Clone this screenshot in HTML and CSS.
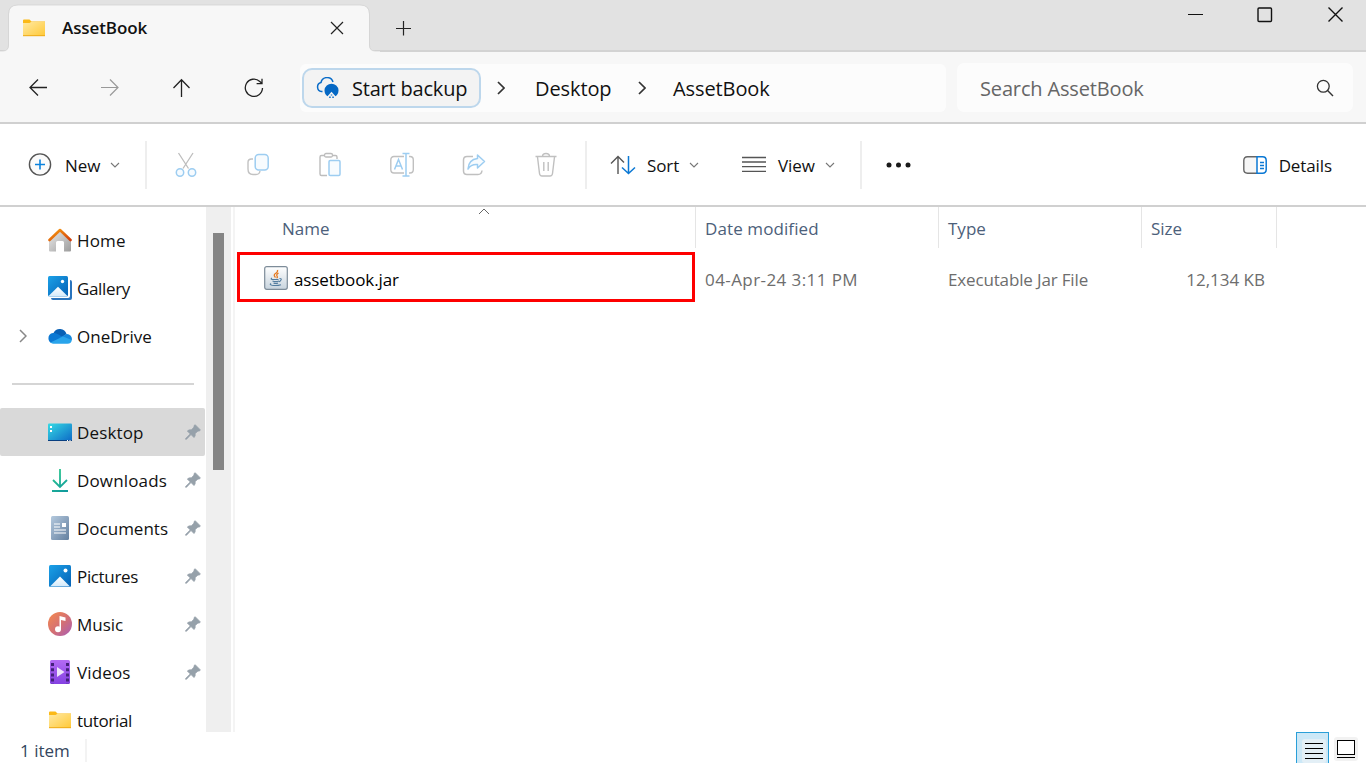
FILE: index.html
```
<!DOCTYPE html>
<html lang="en">
<head>
<meta charset="utf-8">
<title>AssetBook</title>
<link rel="stylesheet" href="styles.css">
</head>
<body>
<svg class="defs" width="0" height="0">
  <defs>
    <linearGradient id="gFolder" x1="0" y1="0" x2="1" y2="1"><stop offset="0" stop-color="#ffe9a2"/><stop offset="1" stop-color="#ffc938"/></linearGradient>
    <linearGradient id="gBlue" x1="0" y1="0" x2="1" y2="1"><stop offset="0" stop-color="#1ba1e8"/><stop offset="1" stop-color="#0561b5"/></linearGradient>
    <linearGradient id="gSnow" x1="0" y1="0" x2="0" y2="1"><stop offset="0" stop-color="#fff"/><stop offset="1" stop-color="#d3eafb"/></linearGradient>
    <linearGradient id="gWall" x1="0" y1="0" x2="1" y2="1"><stop offset="0" stop-color="#ececec"/><stop offset="1" stop-color="#9c9c9c"/></linearGradient>
    <linearGradient id="gRoof" x1="0" y1="0" x2="1" y2="1"><stop offset="0" stop-color="#f9a011"/><stop offset="1" stop-color="#d13d0c"/></linearGradient>
    <linearGradient id="gDesk" x1="0" y1="0" x2="1" y2="1"><stop offset="0" stop-color="#36dbe4"/><stop offset="1" stop-color="#0d69c6"/></linearGradient>
    <linearGradient id="gDown" gradientUnits="userSpaceOnUse" x1="4" y1="0" x2="20" y2="22"><stop offset="0" stop-color="#2fcf8b"/><stop offset="1" stop-color="#119a9d"/></linearGradient>
    <linearGradient id="gDoc" x1="0" y1="0" x2="1" y2="1"><stop offset="0" stop-color="#b4c9de"/><stop offset="1" stop-color="#64809f"/></linearGradient>
    <linearGradient id="gMusic" x1="0" y1="0" x2="1" y2="1"><stop offset="0" stop-color="#f68a4c"/><stop offset=".55" stop-color="#d26f76"/><stop offset="1" stop-color="#a85dba"/></linearGradient>
    <linearGradient id="gVideo" x1="0" y1="0" x2="0" y2="1"><stop offset="0" stop-color="#b46bf4"/><stop offset="1" stop-color="#8441e2"/></linearGradient>
    <linearGradient id="gJar" x1="0" y1="0" x2="0" y2="1"><stop offset="0" stop-color="#fff"/><stop offset="1" stop-color="#c8d4de"/></linearGradient>
    <symbol id="folder" viewBox="0 0 24 18"><path d="M1 1.500Q1 .5 2 .5H7.500L9.500 2.500H23V9H1Z" fill="#fbb917"/><path d="M1 4H7.500L9.500 2.800H23V17H1Z" fill="url(#gFolder)"/><path d="M1 16.700H23" stroke="#eeaa18" stroke-width="1"/></symbol>
    <symbol id="pin" viewBox="0 0 16 16"><path d="M10.200.7 15.400 5.900 14.200 7.200 13.100 6.900 10.200 9.600Q10.700 12 9 13.600L6 10.600 1.500 15.300H.6V14.500L5.200 9.900 2.300 7Q4 5.300 6.400 5.800L9.100 2.900 8.900 1.800Z" fill="#96a1aa" stroke="#96a1aa" stroke-width=".7" stroke-linejoin="round"/></symbol>
    <symbol id="chev" viewBox="0 0 10 6"><path d="M1 1 5 5 9 1" fill="none" stroke="#777" stroke-width="1.100"/></symbol>
    <symbol id="crumb" viewBox="0 0 8 14"><path d="M1 1 7 7 1 13" fill="none" stroke="#333" stroke-width="1.700"/></symbol>
  </defs>
</svg>
<div class="window">
  <header class="tabs">
    <svg class="tab-shape" width="380" height="52" viewBox="0 0 380 52"><path d="M0 52V51H2Q9 51 9 45V14Q9 5 18 5H360Q369 5 369 14V45Q369 51 376 51H380V52Z" fill="#f7f7f7"/><path d="M0 51H3Q8.500 51 8.500 45V14Q8.500 5 18 5H360Q369.500 5 369.500 14V45Q369.500 51 375 51H380" fill="none" stroke="#d2d2d2" stroke-opacity=".75"/></svg>
    <div class="tab">
      <svg width="24" height="18"><use href="#folder"/></svg>
      <span class="tab-title">AssetBook</span>
      <svg class="tab-close" width="14" height="14" viewBox="0 0 14 14"><path d="M1 1 13 13M13 1 1 13" stroke="#222" stroke-width="1.200"/></svg>
    </div>
    <svg class="tab-add" width="16" height="16" viewBox="0 0 16 16"><path d="M7.500 1V15.500M0 8.500H15" stroke="#222" stroke-width="1.200"/></svg>
    <div class="winctl">
      <svg width="16" height="16" viewBox="0 0 16 16"><path d="M0 7.500H15" stroke="#111"/></svg>
      <svg width="16" height="16" viewBox="0 0 16 16"><rect x="1" y="1" width="13.500" height="13.500" rx="1" fill="none" stroke="#111" stroke-width="1.400"/></svg>
      <svg width="16" height="16" viewBox="0 0 16 16"><path d="M.5 .5 14.500 14.500M14.500 .5 .5 14.500" stroke="#111" stroke-width="1.400"/></svg>
    </div>
  </header>

  <nav class="nav">
    <div class="nav-btns">
      <svg width="20" height="20" viewBox="0 0 20 20"><path d="M19 9.500H2M10 1.500 2 9.500 10 17.500" fill="none" stroke="#222" stroke-width="1.300"/></svg>
      <svg width="20" height="20" viewBox="0 0 20 20"><path d="M1 9.500H18M10 1.500 18 9.500 10 17.500" fill="none" stroke="#999" stroke-width="1.200"/></svg>
      <svg width="20" height="20" viewBox="0 0 20 20"><path d="M9.500 19V2M1.500 10 9.500 1.800 17.500 10" fill="none" stroke="#222" stroke-width="1.300"/></svg>
      <svg width="20" height="20" viewBox="0 0 20 20"><path d="M18.500 10A8.600 8.600 0 1 1 15.800 3.500L18 5.500M18 .8V5.700H12.600" fill="none" stroke="#222" stroke-width="1.300"/></svg>
    </div>
    <div class="address">
      <div class="backup">
        <svg width="24" height="22" viewBox="0 0 24 22"><path d="M6.500 14.500H5.500A4.600 4.600 0 0 1 5 5.500 6.200 6.200 0 0 1 17 5" fill="none" stroke="#0a6cc8" stroke-width="1.500"/><path d="M10 18A7 7 0 1 1 21 18L19.500 19.200 15.500 14.800 11.500 19.200Z" fill="#0568c4"/><path d="M15.500 17.500V18.500M13.200 20.300H14.700M16.300 20.300H17.800" stroke="#0568c4" stroke-width="1.500"/></svg>
        <span>Start backup</span>
      </div>
      <svg class="c1" width="8" height="14"><use href="#crumb"/></svg>
      <span class="crumb-d">Desktop</span>
      <svg class="c2" width="8" height="14"><use href="#crumb"/></svg>
      <span class="crumb-a">AssetBook</span>
    </div>
    <div class="search">
      <span>Search AssetBook</span>
      <svg width="18" height="18" viewBox="0 0 18 18"><circle cx="7.300" cy="7.300" r="5.900" fill="none" stroke="#333" stroke-width="1.300"/><path d="M11.600 11.600 17 17" stroke="#333" stroke-width="1.400"/></svg>
    </div>
  </nav>

  <div class="commands">
    <div class="group new">
      <svg width="24" height="24" viewBox="0 0 24 24"><circle cx="12" cy="11.500" r="10.600" fill="#fbfbfb" stroke="#555" stroke-width="1.400"/><path d="M12 6.500V16.500M7 11.500H17" stroke="#0b82dd" stroke-width="1.600"/></svg>
      <span class="label-new">New</span>
      <svg width="10" height="6"><use href="#chev"/></svg>
    </div>
    <div class="group edit">
      <svg width="24" height="26" viewBox="0 0 24 26"><path d="M4.500 1 14.500 16.500M19 1 9 16.500" stroke="#bdbdbd" stroke-width="1.300"/><g fill="#f6fbff" stroke="#9dcdf1" stroke-width="1.500"><circle cx="6" cy="20.500" r="3.700"/><circle cx="18" cy="20.500" r="3.700"/></g></svg>
      <svg width="24" height="26" viewBox="0 0 24 26"><path d="M7 7H5.500Q2 7 2 10.500V17Q2 22.500 7 22.500H10Q13.500 22.500 14 19" fill="none" stroke="#c2c2c2" stroke-width="1.400"/><rect x="9.200" y="2.500" width="13" height="15.500" rx="3.500" fill="#f7fbfe" stroke="#9dcdf1" stroke-width="1.500"/></svg>
      <svg width="24" height="26" viewBox="0 0 24 26"><path d="M7 3.500H3.500Q2 3.500 2 5V22Q2 23.500 3.500 23.500H9M15 3.500H17.500Q19 3.500 19 5V7" fill="none" stroke="#bdbdbd" stroke-width="1.400"/><rect x="6.500" y="1.500" width="8" height="3.500" rx="1.500" fill="none" stroke="#bdbdbd" stroke-width="1.300"/><rect x="11" y="8.500" width="11" height="15" rx="1.200" fill="#f7fbfe" stroke="#9dcdf1" stroke-width="1.500"/></svg>
      <svg width="24" height="26" viewBox="0 0 24 26"><path d="M14 4.500H4Q.8 4.500 .8 8V17.500Q.8 21 4 21H14M19 4.500H20Q23.300 4.500 23.300 8V17.500Q23.300 21 20 21H19" fill="none" stroke="#c0c0c0" stroke-width="1.400"/><path d="M4.500 17.500 8.500 7.500 12.500 17.500M6 14H11M16 1.500V24M12.500 1.500H19.500M12.500 24H19.500" fill="none" stroke="#9dcdf1" stroke-width="1.500"/></svg>
      <svg width="24" height="26" viewBox="0 0 24 26"><path d="M11 4.500H5Q1.500 4.500 1.500 8V19Q1.500 22.500 5 22.500H16Q19.500 22.500 20 18.500" fill="none" stroke="#c0c0c0" stroke-width="1.500"/><path d="M15.500 3 22.500 9.500 15.500 16V12.500Q9 12 6 17 6.500 7.500 15.500 6.500Z" fill="#f7fbfe" stroke="#9dcdf1" stroke-width="1.500" stroke-linejoin="round"/></svg>
      <svg width="24" height="26" viewBox="0 0 24 26"><path d="M1.500 4.500H22.500M8.500 4.500Q8.500 1.500 12 1.500T15.500 4.500M3.500 5 5.500 21.500Q5.800 24 8 24H16Q18.200 24 18.500 21.500L20.500 5M9.800 10V19M14.200 10V19" fill="none" stroke="#c0c0c0" stroke-width="1.400"/></svg>
    </div>
    <div class="group arrange">
      <svg width="26" height="20" viewBox="0 0 26 20"><path d="M8 19V1.500M1 8.500 8 1.500 14 7.500" fill="none" stroke="#555" stroke-width="1.400"/><path d="M18.500 1V18.500M12 12.500 18.500 18.500 25 12.500" fill="none" stroke="#0b78d4" stroke-width="1.500"/></svg>
      <span class="label-sort">Sort</span>
      <svg width="10" height="6"><use href="#chev"/></svg>
      <svg class="view-icon" width="24" height="17" viewBox="0 0 24 17"><path d="M0 1.500H24M0 6H24M0 10.700H24M0 15.300H24" stroke="#555" stroke-width="1.300"/></svg>
      <span class="label-view">View</span>
      <svg width="10" height="6"><use href="#chev"/></svg>
    </div>
    <svg class="more" width="26" height="6" viewBox="0 0 26 6"><g fill="#1a1a1a"><circle cx="3" cy="3" r="2.500"/><circle cx="12.500" cy="3" r="2.500"/><circle cx="22" cy="3" r="2.500"/></g></svg>
    <div class="details">
      <svg width="24" height="18" viewBox="0 0 24 18"><path d="M14 .8H4.500Q.8 .8 .8 4.500V13.500Q.8 17.200 4.500 17.200H14" fill="#f6f6f6" stroke="#666" stroke-width="1.400"/><path d="M14 .8H19.500Q23.200 .8 23.200 4.500V13.500Q23.200 17.200 19.500 17.200H14Z" fill="#fff" stroke="#0b78d4" stroke-width="1.500"/><path d="M17 6.500H21M17 9.500H21M17 12.500H21" stroke="#0b78d4" stroke-width="1.300"/></svg>
      <span>Details</span>
    </div>
  </div>

  <main class="body">
    <aside class="side">
      <div class="item"><svg width="24" height="24" viewBox="0 0 24 24"><path d="M1 12 12 2 23 12V22.500Q23 23.500 22 23.500H16V14.500Q16 13 14.500 13H9.500Q8 13 8 14.500V23.500H2Q1 23.500 1 22.500Z" fill="url(#gWall)"/><path d="M1.500 12 12 2 22.500 12" fill="none" stroke="url(#gRoof)" stroke-width="2.600" stroke-linejoin="round" stroke-linecap="round"/></svg><span class="t-home">Home</span></div>
      <div class="item"><svg width="24" height="24" viewBox="0 0 24 24"><path d="M22 4Q24 4 24 6V22Q24 24 22 24H5Q3 24 3 22H20Q22 22 22 20Z" fill="#2a74bd"/><rect width="20" height="20.500" rx="1.500" fill="url(#gBlue)"/><path d="M0 20.500 10 10.800 20 20.500Z" fill="url(#gSnow)"/><circle cx="14.500" cy="5.500" r="1.700" fill="#fff"/></svg><span class="t-tight">Gallery</span></div>
      <div class="item"><svg class="expand" width="8" height="14" viewBox="0 0 8 14"><path d="M1 1 7 7 1 13" fill="none" stroke="#888" stroke-width="1.500"/></svg><svg width="24" height="24" viewBox="0 0 24 24"><path d="M5.500 9A7 7 0 0 1 18.500 10L13 14Z" fill="#0860b5"/><path d="M5 19.500A5.300 5.300 0 0 1 5 9Q8 8.500 10.500 10.500L18 15 3 19Z" fill="#0b78d3"/><path d="M11 14 18.500 10A5 5 0 0 1 23.800 16L18 17Z" fill="#1687dc"/><path d="M2.500 18.500 15 12.500 23.800 16Q23.500 19.500 19.500 19.700H5Q3.500 19.500 2.500 18.500Z" fill="#29a4eb"/></svg><span>OneDrive</span></div>
      <div class="rule"></div>
      <div class="item selected"><svg width="24" height="24" viewBox="0 0 24 24"><rect y="3.500" width="24" height="17.500" rx="1" fill="url(#gDesk)"/><path d="M0 20.500H24" stroke="#083f80"/><path d="M2 6H4V8H2ZM2 10H4V12H2ZM19 20H20V21H19ZM21.500 20H22.500V21H21.500Z" fill="#fff"/></svg><span class="t-home">Desktop</span><svg class="pin" width="16" height="16"><use href="#pin"/></svg></div>
      <div class="item"><svg width="24" height="24" viewBox="0 0 24 24"><path d="M12 1V19M5 12 12 19 19 12M4 23H20" fill="none" stroke="url(#gDown)" stroke-width="1.800"/></svg><span class="t-home">Downloads</span><svg class="pin" width="16" height="16"><use href="#pin"/></svg></div>
      <div class="item"><svg width="24" height="24" viewBox="0 0 24 24"><rect x="3" width="18" height="24" rx="1.500" fill="url(#gDoc)"/><path d="M6 8H12M6 11H12M6 14H18M6 17H18" stroke="#fff" stroke-width="1.200"/><rect x="14" y="7" width="4" height="4" fill="#fff"/></svg><span>Documents</span><svg class="pin" width="16" height="16"><use href="#pin"/></svg></div>
      <div class="item"><svg width="24" height="24" viewBox="0 0 24 24"><rect x="1" y="1" width="22" height="22" rx="1.500" fill="url(#gBlue)"/><path d="M2 22.500 12 12.500 22 22.500Z" fill="url(#gSnow)"/><circle cx="17.500" cy="6.500" r="2" fill="#fff"/></svg><span class="t-tight">Pictures</span><svg class="pin" width="16" height="16"><use href="#pin"/></svg></div>
      <div class="item"><svg width="24" height="24" viewBox="0 0 24 24"><circle cx="12" cy="12" r="12" fill="url(#gMusic)"/><circle cx="10" cy="17.200" r="3" fill="#fff"/><path d="M11.500 4 17.500 5.500V9L13 8V17.200H11.500Z" fill="#fff"/></svg><span>Music</span><svg class="pin" width="16" height="16"><use href="#pin"/></svg></div>
      <div class="item"><svg width="24" height="24" viewBox="0 0 24 24"><rect x="2" width="20" height="24" rx="1.500" fill="url(#gVideo)"/><path d="M4.500 3V24M19.500 3V24" stroke="#44217b" stroke-width="3" stroke-dasharray="3 2.200"/><path d="M9 7 16.500 12 9 17Z" fill="#eee4fc"/></svg><span class="t-home">Videos</span><svg class="pin" width="16" height="16"><use href="#pin"/></svg></div>
      <div class="item"><svg width="24" height="18"><use href="#folder"/></svg><span class="t-tight">tutorial</span></div>
    </aside>
    <div class="scroll"><div class="thumb"></div></div>
    <section class="files">
      <div class="row head">
        <div class="col name"><svg class="sort-mark" width="12" height="7" viewBox="0 0 12 7"><path d="M1 6 6 1 11 6" fill="none" stroke="#666"/></svg><span>Name</span></div>
        <div class="col date"><span class="h-date">Date modified</span></div>
        <div class="col type"><span>Type</span></div>
        <div class="col size"><span>Size</span></div>
      </div>
      <div class="row file">
        <div class="col name"><svg class="jar" width="24" height="24" viewBox="0 0 24 24"><rect x=".7" y=".7" width="22.600" height="22.600" rx="2" fill="url(#gJar)" stroke="#7d8c99" stroke-width="1.200"/><path d="M13.500 4Q14 6 11.500 7.500T11.500 11.500M14.500 7Q12 8.500 13 10T12.500 12" fill="none" stroke="#e67a20" stroke-width="1.300"/><path d="M8 12Q6 13.200 8.500 13.500H14.500M8.500 15Q11.500 16.300 15 15M9.500 17Q12 18 14 17M15.500 12.500Q18 12.300 17 14T15 15.600M7 17.500Q5 18.800 8 19.300 13 20 17 18.700" fill="none" stroke="#527c9f" stroke-width="1.100"/></svg><span class="f-name">assetbook.jar</span></div>
        <div class="col date"><span class="f-date">04-Apr-24 3:11 PM</span></div>
        <div class="col type"><span class="f-type">Executable Jar File</span></div>
        <div class="col size"><span>12,134 KB</span></div>
      </div>
    </section>
  </main>

  <footer class="status">
    <span>1 item</span>
    <div class="view-list"><svg width="24" height="24" viewBox="0 0 24 24"><rect width="24" height="24" rx="2.500" fill="#e3eff6"/><path d="M3 4.500H21M3 9.500H21M3 14.500H21M3 19.500H21" stroke="#000"/></svg></div>
    <svg class="view-large" width="24" height="24" viewBox="0 0 24 24"><rect width="24" height="24" rx="3" fill="#f2f2f2"/><rect x="3.500" y="3.500" width="17" height="14" fill="#fff" stroke="#000"/><path d="M3 20.500H21" stroke="#000"/></svg>
  </footer>
</div>
</body>
</html>
```
FILE: styles.css
```
* { box-sizing: border-box; }
body { margin: 0; font-family: "Open Sans", "Noto Sans", sans-serif; font-size: 17px; color: #111; background: #fff; }
svg { display: block; flex: none; }
span { white-space: nowrap; flex: none; }
.defs { position: absolute; }
.window { display: flex; flex-direction: column; width: 1366px; height: 763px; overflow: hidden; }

.tabs { position: relative; display: flex; height: 52px; flex: none; background: #e2e2e2; border-bottom: 2px solid #d3d3d3; }
.tab-shape { position: absolute; left: 0; top: 0; }
.tab { position: relative; display: flex; align-items: center; width: 369px; height: 50px; padding: 6px 0 0 22px; }
.tab-title { margin: -1px 0 0 16px; font-weight: 600; font-size: 17px; letter-spacing: -.1px; }
.tab-close { margin: 0 25px 1px auto; }
.tab-add { margin: 20px 0 0 27px; }
.winctl { display: flex; gap: 53px; margin: 7px 22px 0 auto; }
.winctl svg:last-child { margin-left: 2px; }

.nav { display: flex; height: 72px; flex: none; background: #f7f7f7; border-bottom: 2px solid #d0d0d0; }
.nav-btns { display: flex; gap: 52px; width: 300px; padding: 26px 0 0 28px; }
.address { display: flex; align-items: center; width: 646px; height: 48px; margin-top: 12px; border-radius: 6px; background: #fcfcfc; font-size: 20px; letter-spacing: -.1px; }
.backup { display: flex; align-items: center; width: 179px; height: 40px; margin-left: 2px; padding-left: 12px; border: 2px solid #bdd7ec; border-radius: 10px; background: #f3f3f3; gap: 12px; letter-spacing: -.2px; }
.c1 { margin-left: 16px; }
.crumb-d { width: 80px; margin-left: 30px; }
.c2 { margin-left: 23px; }
.crumb-a { margin-left: 27px; }
.search { display: flex; align-items: center; justify-content: space-between; width: 396px; height: 49px; margin: 11px 0 0 11px; padding: 0 19px 0 23px; border-radius: 7px; background: #fcfcfc; font-size: 20px; letter-spacing: -.15px; color: #666; }
.search span { padding-top: 1px; }

.commands { display: flex; align-items: center; height: 83px; flex: none; border-bottom: 2px solid #d0d0d0; }
.commands span { padding-top: 1px; letter-spacing: -.1px; }
.group { display: flex; align-items: center; height: 48px; border-right: 2px solid #eee; }
.new { width: 147px; padding-left: 28px; }
.label-new { width: 45px; margin-left: 13px; }
.edit { width: 440px; padding-left: 27px; gap: 48px; }
.arrange { width: 275px; padding-left: 23px; }
.label-sort { width: 42px; margin-left: 11px; }
.view-icon { margin-left: 43px; }
.label-view { width: 47px; margin-left: 12px; }
.more { margin: 1px 0 0 24px; }
.details { display: flex; align-items: center; gap: 12px; margin: 0 34px 0 auto; }

.body { display: flex; height: 525px; flex: none; }
.side { width: 206px; padding-top: 9px; overflow: hidden; }
.item { position: relative; display: flex; align-items: center; gap: 5px; width: 205px; height: 48px; padding-left: 48px; }
.t-home { letter-spacing: .15px; }
.t-tight { letter-spacing: -.35px; }
.expand { position: absolute; left: 19px; }
.pin { position: absolute; right: 4px; }
.selected { background: #d9d9d9; border-radius: 2px; }
.rule { height: 48px; padding: 23px 12px 0; }
.rule::before { content: ""; display: block; height: 2px; background: #d5d5d5; }
.scroll { width: 25px; padding: 26px 7px 0; background: #efefef; }
.thumb { height: 237px; background: #858585; }
.files { flex: 1; margin-left: 2px; border-left: 2px solid #f4f4f4; }
.row { display: flex; padding-left: 2px; }
.col { display: flex; align-items: center; }
.head { height: 41px; color: #4c607a; }
.head .col { position: relative; border-right: 1px solid #e5e5e5; padding-top: 1px; }
.sort-mark { position: absolute; left: 241px; top: 1px; }
.name { width: 459px; }
.date { width: 243px; padding-left: 9px; }
.type { width: 203px; padding-left: 9px; }
.size { width: 135px; padding-left: 9px; }
.head .name { padding-left: 45px; }
.h-date { letter-spacing: .1px; }
.file { height: 50px; margin-top: 4px; color: #6d6d6d; }
.file .col { padding-top: 4px; }
.file .name { width: 458px; margin-right: 1px; padding: 0 0 0 24px; border: 3px solid #fe0000; gap: 6px; color: #000; }
.jar { margin-top: 1px; }
.f-name { padding-top: 4px; letter-spacing: -.1px; }
.f-date { letter-spacing: .42px; }
.f-type { letter-spacing: -.15px; }
.file .size { justify-content: flex-end; padding-right: 12px; }

.status { display: flex; height: 31px; flex: none; color: #34465e; }
.status span { width: 67px; height: 23px; margin: 7px 0 0 20px; line-height: 24px; border-right: 2px solid #f3f3f3; }
.view-list { width: 33px; height: 32px; margin-left: auto; padding: 6px 0 0 5px; border: 1px solid #2a9fd8; background: #cce8f7; }
.view-large { margin: 5px 8px 0 5px; }
```
